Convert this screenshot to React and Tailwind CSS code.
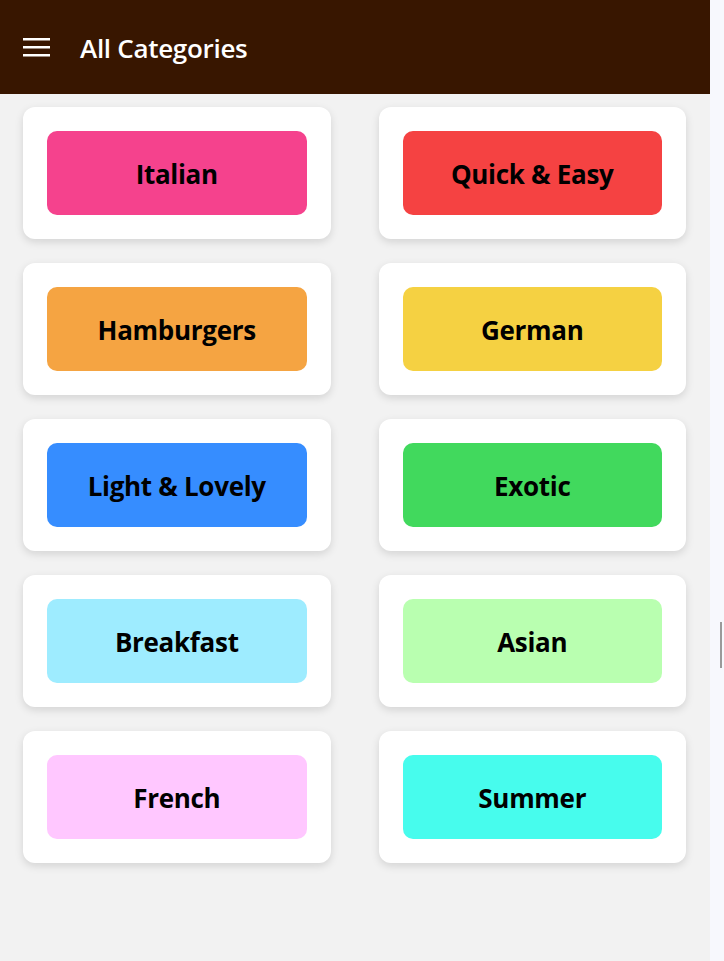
import React from "react";

const categories = [
    { title: "Italian", color: "bg-[#f5428d]" },
    { title: "Quick & Easy", color: "bg-[#f54242]" },
    { title: "Hamburgers", color: "bg-[#f5a442]" },
    { title: "German", color: "bg-[#f5d142]" },
    { title: "Light & Lovely", color: "bg-[#368dff]" },
    { title: "Exotic", color: "bg-[#41d95d]" },
    { title: "Breakfast", color: "bg-[#9eecff]" },
    { title: "Asian", color: "bg-[#b9ffb0]" },
    { title: "French", color: "bg-[#ffc7ff]" },
    { title: "Summer", color: "bg-[#47fced]" },
];

const MenuIcon = () => (
    <svg width="28" height="20" viewBox="0 0 28 20" className="block">
        <rect x="0" y="1" width="27" height="2.5" fill="#fff" />
        <rect x="0" y="9" width="27" height="2.5" fill="#fff" />
        <rect x="0" y="17" width="27" height="2.5" fill="#fff" />
    </svg>
);

const CategoryTile = ({ title, color }) => (
    <div className="bg-white rounded-xl p-6 shadow-[0_3px_8px_rgba(0,0,0,0.13)]">
        <div className={`${color} h-[84px] rounded-[10px] flex items-center justify-center`}>
            <span className="text-[26px] leading-none pt-[2px] font-bold text-black tracking-[-0.3px]">{title}</span>
        </div>
    </div>
);

export default function App() {
    return (
        <div className="flex w-[724px] h-[961px] overflow-hidden font-['Open_Sans',sans-serif]">
            <div className="w-[710px] h-full bg-[#f2f2f2] flex flex-col">
                {/* header */}
                <div className="h-[94px] bg-[#381600] flex items-center pl-[23px] shrink-0">
                    <MenuIcon />
                    <h1 className="ml-[29px] text-white text-[26px] leading-none pt-[2px] font-semibold tracking-[-0.3px]">All Categories</h1>
                </div>

                {/* grid */}
                <div className="grid grid-cols-2 gap-x-12 gap-y-6 pl-[23px] pr-[24px] pt-[13px]">
                    {categories.map((c) => (
                        <CategoryTile key={c.title} {...c} />
                    ))}
                </div>
            </div>

            {/* side edge */}
            <div className="w-[14px] h-full bg-[#f7f8fd] flex flex-col pt-[622px] pl-[10px]">
                <div className="w-[2px] h-[46px] bg-[#9a9a9a]" />
            </div>
        </div>
    );
}
